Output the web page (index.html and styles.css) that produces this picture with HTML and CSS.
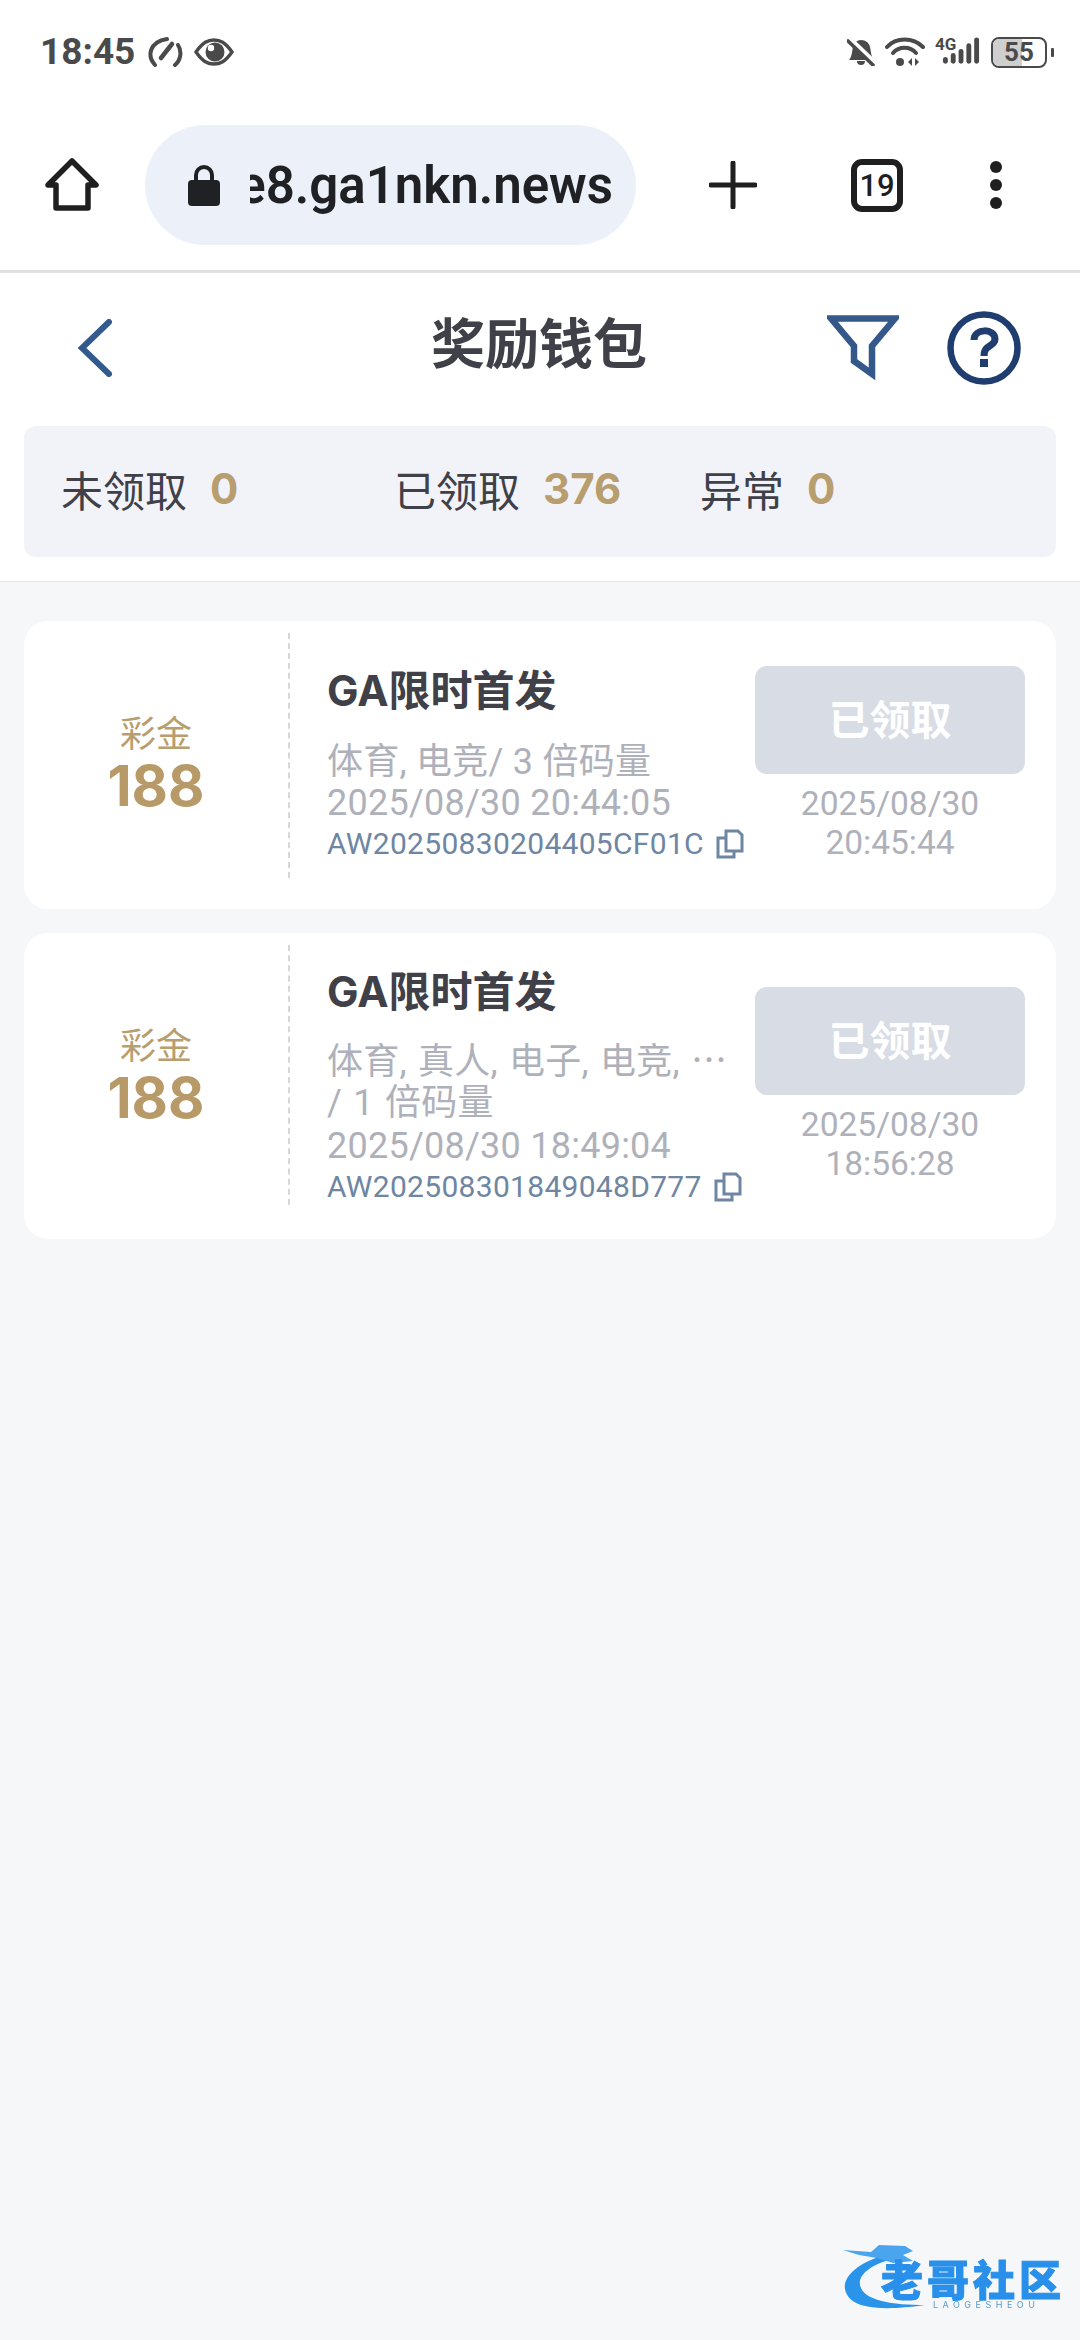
FILE: index.html
```html
<!DOCTYPE html>
<html lang="zh-CN">
<head>
    <meta charset="UTF-8">
    <meta name="viewport" content="width=device-width, initial-scale=1.0">
    <title>奖励钱包</title>
    <link rel="stylesheet" href="styles.css">
</head>
<body>

    <div class="status-bar">
        <div class="status-left">
            <span class="time">18:45</span>
            <svg class="ic-gauge" width="36" height="32" viewBox="0 0 36 32" fill="none" stroke="#4a4a4a" stroke-width="4" stroke-linecap="round">
                <path d="M8 29 C0 20 2 6 20 3"/>
                <path d="M31 9 C35 15 34 24 28 29"/>
                <path d="M14 22 L25 8" stroke-width="4.500"/>
            </svg>
            <svg class="ic-eye" width="40" height="28" viewBox="0 0 40 28">
                <path d="M2 14 C9 4 14 2 20 2 C26 2 31 4 38 14 C31 24 26 26 20 26 C14 26 9 24 2 14 Z" fill="none" stroke="#4a4a4a" stroke-width="3.400"/>
                <circle cx="21" cy="14" r="9.500" fill="#4a4a4a"/>
                <circle cx="17" cy="10" r="3.200" fill="#fff"/>
            </svg>
        </div>
        <div class="status-right">
            <svg width="28" height="28" viewBox="0 0 28 28">
                <path d="M2 22 C5 19 5 13 6 9 C7 5 10 2 14 2 C19 2 22 5 23 9 C24 13 24 19 27 22 Z" fill="#4a4a4a"/>
                <path d="M10 23 H18 A4 4 0 0 1 10 23 Z" fill="#4a4a4a"/>
                <path d="M3 1 L27 24" stroke="#fff" stroke-width="5"/>
                <path d="M1 3 L26 27" stroke="#4a4a4a" stroke-width="3.600" stroke-linecap="round"/>
            </svg>
            <svg width="40" height="30" viewBox="0 0 40 30" fill="none" stroke="#4a4a4a" stroke-width="4" stroke-linecap="round">
                <path d="M2 10 C11 0 28 0 38 10"/>
                <path d="M8 16 C14 9 25 9 31 16"/>
                <circle cx="15" cy="25" r="4" fill="#4a4a4a" stroke="none"/>
                <path d="M27 21 L23 25 L27 29 Z M30 21 L34 25 L30 29 Z" fill="#4a4a4a" stroke="none"/>
            </svg>
            <div class="signal">
                <span class="net">4G</span>
                <svg width="40" height="30" viewBox="0 0 40 30" fill="#4a4a4a">
                    <rect x="1" y="20" width="5" height="7" rx="2.500"/>
                    <rect x="9" y="16" width="5" height="11" rx="2.500"/>
                    <rect x="17" y="12" width="5" height="15" rx="2.500"/>
                    <rect x="25" y="6" width="5" height="21" rx="2.500"/>
                    <rect x="33" y="0" width="5" height="27" rx="2.500"/>
                </svg>
            </div>
            <div class="battery">
                <div class="battery-body">
                    <div class="battery-fill"></div>
                    <span>55</span>
                </div>
                <div class="battery-nub"></div>
            </div>
        </div>
    </div>

    <div class="browser-bar">
        <svg class="ic-home" width="54" height="54" viewBox="0 0 54 54" fill="none" stroke="#1f1f1f" stroke-width="5.500" stroke-linejoin="round">
            <path d="M3 27 L27 3 L51 27 H43 V50 H11 V27 Z"/>
        </svg>
        <div class="url-pill">
            <svg width="32" height="42" viewBox="0 0 32 42" fill="#202124">
                <path d="M8 18 V11 A8 8 0 0 1 24 11 V18" fill="none" stroke="#202124" stroke-width="4"/>
                <rect x="0" y="16" width="32" height="26" rx="4"/>
            </svg>
            <div class="url-text"><span>e8.ga1nkn.news</span></div>
        </div>
        <svg class="ic-plus" width="48" height="48" viewBox="0 0 48 48" stroke="#1f1f1f" stroke-width="5" stroke-linecap="round">
            <path d="M24 2 V46 M2 24 H46"/>
        </svg>
        <div class="tab-count">19</div>
        <div class="more-dots"><i></i><i></i><i></i></div>
    </div>

    <div class="top-panel">
        <div class="page-head">
            <div class="head-left">
                <svg class="ic-back" width="36" height="58" viewBox="0 0 36 58" fill="none" stroke="#335a8e" stroke-width="6" stroke-linecap="round">
                    <path d="M32 3 L5 29 L32 55"/>
                </svg>
            </div>
            <h1>奖励钱包</h1>
            <div class="head-right">
                <svg class="ic-filter" width="72" height="66" viewBox="0 0 72 66" fill="none" stroke="#34588a" stroke-width="6.500">
                    <path d="M4 3.500 H68 L45 31 V59 L27 46 V31 Z"/>
                </svg>
                <svg class="ic-help" width="74" height="74" viewBox="0 0 74 74" fill="none">
                    <circle cx="37" cy="37" r="33.500" stroke="#1f3d6e" stroke-width="6.500"/>
                    <path d="M27 29 C27 17 48 17 48 28 C48 36 37 33 37 45" stroke="#1f3d6e" stroke-width="7"/>
                    <rect x="33" y="48" width="8" height="8" fill="#1f3d6e"/>
                </svg>
            </div>
        </div>
        <div class="stats">
            <div class="stat stat-new">未领取<b>0</b></div>
            <div class="stat stat-done">已领取<b>376</b></div>
            <div class="stat stat-error">异常<b>0</b></div>
        </div>
    </div>

    <div class="wallet-list">

        <div class="reward-card">
            <div class="amount-col">
                <div class="amount-label">彩金</div>
                <div class="amount">188</div>
            </div>
            <div class="info">
                <div class="title">GA限时首发</div>
                <div class="desc">体育, 电竞/ 3 倍码量</div>
                <div class="date">2025/08/30 20:44:05</div>
                <div class="code">AW20250830204405CF01C
                    <svg class="ic-copy" width="28" height="30" viewBox="0 0 28 30" fill="none" stroke="#6f86a3" stroke-width="3">
                        <path d="M10 2 H22 L26 6 V22 H10 Z"/>
                        <path d="M10 9 H2 V28 H18 V22"/>
                    </svg>
                </div>
            </div>
            <div class="claim-col">
                <button class="claim-btn">已领取</button>
                <div class="claim-date">2025/08/30<br>20:45:44</div>
            </div>
        </div>

        <div class="reward-card reward-card-long">
            <div class="amount-col">
                <div class="amount-label">彩金</div>
                <div class="amount">188</div>
            </div>
            <div class="info">
                <div class="title">GA限时首发</div>
                <div class="desc">体育, 真人, 电子, 电竞, ⋯</div>
                <div class="desc">/ 1 倍码量</div>
                <div class="date">2025/08/30 18:49:04</div>
                <div class="code">AW202508301849048D777
                    <svg class="ic-copy" width="28" height="30" viewBox="0 0 28 30" fill="none" stroke="#6f86a3" stroke-width="3">
                        <path d="M10 2 H22 L26 6 V22 H10 Z"/>
                        <path d="M10 9 H2 V28 H18 V22"/>
                    </svg>
                </div>
            </div>
            <div class="claim-col">
                <button class="claim-btn">已领取</button>
                <div class="claim-date">2025/08/30<br>18:56:28</div>
            </div>
        </div>

    </div>

    <!-- watermark -->
    <div class="watermark">
        <svg width="120" height="72" viewBox="0 0 120 72">
            <path d="M42 12 C14 20 0 34 2 46 C5 62 26 70 82 62 C50 62 20 58 17 42 C15 32 28 22 46 17 Z" fill="#2a93ea"/>
            <path d="M0 7 L28 9 L36 2 L62 3 L70 8 L60 12 L70 18 L50 20 L34 15 L16 12 Z" fill="#4aa5ee"/>
        </svg>
        <div class="wm-name">老哥社区</div>
        <div class="wm-sub">LAOGESHEOU</div>
    </div>

</body>
</html>
```

FILE: styles.css
```css
* {
    box-sizing: border-box;
}

html,
body {
    margin: 0;
    padding: 0;
}

body {
    width: 1080px;
    height: 2340px;
    position: relative;
    overflow: hidden;
    font-family: Inter, "Noto Sans CJK SC", sans-serif;
    background-color: #f6f7f9;
    color: #3f4048;
}

/* status bar */
.status-bar {
    height: 90px;
    padding: 14px 26px 0 40px;
    display: flex;
    align-items: center;
    justify-content: space-between;
    background-color: #fff;
    color: #4a4a4a;
}

.status-left,
.status-right {
    display: flex;
    align-items: center;
}

.time {
    font-family: Roboto, sans-serif;
    font-weight: 700;
    font-size: 37px;
    line-height: 36px;
    margin-right: 12px;
}

.ic-eye {
    margin-left: 11px;
}

.status-right svg {
    display: block;
}

.status-right {
    gap: 10px;
}

.signal {
    position: relative;
    width: 46px;
    height: 30px;
    display: flex;
}

.signal svg {
    margin-left: 7px;
}

.net {
    position: absolute;
    left: 0;
    top: -1px;
    font-family: Roboto, sans-serif;
    font-weight: 700;
    font-size: 17px;
    line-height: 16px;
}

.battery {
    display: flex;
    align-items: center;
    gap: 4px;
}

.battery-body {
    position: relative;
    width: 56px;
    height: 31px;
    border: 2.500px solid #4a4a4a;
    border-radius: 8px;
    overflow: hidden;
    display: flex;
    align-items: center;
    justify-content: center;
}

.battery-fill {
    position: absolute;
    left: 0;
    top: 0;
    bottom: 0;
    width: 55%;
    background-color: #cfcfcf;
}

.battery-body span {
    position: relative;
    font-family: Roboto, sans-serif;
    font-weight: 700;
    font-size: 26px;
    line-height: 26px;
}

.battery-nub {
    width: 3px;
    height: 9px;
    border-radius: 1px;
    background-color: #4a4a4a;
}

/* browser toolbar */
.browser-bar {
    height: 183px;
    padding: 10px 0 0 45px;
    display: flex;
    align-items: center;
    background-color: #fff;
    border-bottom: 3px solid #e0e0e0;
}

.ic-home {
    flex-shrink: 0;
}

.url-pill {
    width: 491px;
    height: 120px;
    margin-left: 46px;
    padding-left: 43px;
    display: flex;
    align-items: center;
    border-radius: 60px;
    background-color: #ecf1f9;
}

.url-text {
    width: 363px;
    margin-left: 30px;
    display: flex;
    justify-content: flex-end;
    overflow: hidden;
    font-family: Roboto, sans-serif;
    font-weight: 600;
    font-size: 51px;
    color: #202124;
    white-space: nowrap;
}

.url-text span {
    flex-shrink: 0;
}

.ic-plus {
    margin-left: 73px;
}

.tab-count {
    width: 52px;
    height: 53px;
    margin-left: 94px;
    border: 6px solid #1f1f1f;
    border-radius: 11px;
    display: flex;
    align-items: center;
    justify-content: center;
    font-family: Roboto, sans-serif;
    font-weight: 500;
    font-size: 31px;
    color: #1f1f1f;
}

.more-dots {
    margin-left: 87px;
    display: flex;
    flex-direction: column;
    gap: 6px;
}

.more-dots i {
    display: block;
    width: 12px;
    height: 12px;
    border-radius: 50%;
    background-color: #1f1f1f;
}

/* page header + stats */
.top-panel {
    background-color: #fff;
    border-bottom: 1px solid #e3e5ea;
    padding-bottom: 24px;
}

.page-head {
    height: 153px;
    display: grid;
    grid-template-columns: 1fr auto 1fr;
    align-items: center;
    padding: 0 59px 3px 77px;
}

.head-left {
    display: flex;
}

.head-right {
    display: flex;
    align-items: center;
    justify-content: flex-end;
    gap: 48px;
}

.page-head h1 {
    margin: 0;
    padding: 0 20px 6px 0;
    font-size: 54px;
    line-height: 60px;
    font-weight: 700;
    text-align: center;
    color: #3f4048;
}

.stats {
    height: 131px;
    margin: 0 24px;
    padding-bottom: 6px;
    display: flex;
    align-items: center;
    border-radius: 12px;
    background-color: #f2f3f8;
    font-size: 42px;
    color: #3f4048;
}

.stat {
    display: flex;
    align-items: center;
    white-space: nowrap;
}

.stat b {
    margin-left: 23px;
    font-weight: 700;
    color: #b89d6e;
}

.stat-new {
    margin-left: 37px;
    width: 333px;
}

.stat-done {
    width: 306px;
}

/* reward cards */
.wallet-list {
    padding: 39px 24px 0;
    display: flex;
    flex-direction: column;
    gap: 24px;
}

.reward-card {
    display: flex;
    padding: 12px 31px 31px 0;
    border-radius: 24px;
    background-color: #fff;
}

.reward-card-long {
    padding-bottom: 34px;
}

.amount-col {
    width: 266px;
    flex-shrink: 0;
    padding-top: 18px;
    display: flex;
    flex-direction: column;
    align-items: center;
    justify-content: center;
    border-right: 2px dashed #d6d7db;
    color: #b89d6e;
}

.reward-card-long .amount-col {
    padding-top: 3px;
}

.amount-label {
    font-size: 36px;
    line-height: 42px;
}

.amount {
    font-size: 56px;
    line-height: 62px;
    font-weight: 700;
    color: #b89a68;
}

.info {
    flex: 1;
    min-width: 0;
    padding: 31px 0 16px 37px;
}

.reward-card-long .info {
    padding-top: 20px;
    padding-bottom: 0;
}

.title {
    font-size: 42px;
    line-height: 54px;
    font-weight: 700;
    margin-bottom: 24px;
    color: #3f4048;
}

.reward-card-long .title {
    margin-bottom: 23px;
}

.desc,
.date {
    font-family: Roboto, "Noto Sans CJK SC", sans-serif;
    font-size: 36px;
    line-height: 41px;
    letter-spacing: 0.25px;
    color: #afb1ba;
    white-space: nowrap;
}

.reward-card-long .desc {
    word-spacing: 2px;
}

.reward-card-long .date {
    margin-top: 2px;
}

.code {
    margin-top: 2px;
    display: flex;
    align-items: center;
    gap: 12px;
    font-family: Roboto, sans-serif;
    font-size: 30px;
    line-height: 36px;
    letter-spacing: 0.3px;
    color: #6f86a3;
    white-space: nowrap;
}

.claim-col {
    width: 270px;
    flex-shrink: 0;
    padding-top: 33px;
    text-align: center;
}

.reward-card-long .claim-col {
    padding-top: 42px;
}

.claim-btn {
    display: block;
    width: 100%;
    height: 108px;
    padding: 0 0 6px;
    border: none;
    border-radius: 12px;
    background-color: #d8dce5;
    color: #fff;
    font-family: inherit;
    font-size: 41px;
    font-weight: 700;
}

.claim-date {
    margin-top: 10px;
    font-family: Roboto, sans-serif;
    font-size: 33.500px;
    line-height: 39px;
    color: #afb1ba;
}

/* watermark over the page */
.watermark {
    position: absolute;
    left: 843px;
    top: 2243px;
    width: 225px;
    height: 72px;
    filter: blur(0.6px);
}

.wm-name {
    position: absolute;
    left: 38px;
    top: 20px;
    font-weight: 900;
    font-size: 42px;
    line-height: 36px;
    letter-spacing: 4px;
    white-space: nowrap;
    color: #2890ea;
    -webkit-text-stroke: 1px #2890ea;
}

.wm-sub {
    position: absolute;
    left: 90px;
    top: 57px;
    font-size: 9px;
    line-height: 10px;
    letter-spacing: 4.500px;
    color: #5a9bd5;
}
```
